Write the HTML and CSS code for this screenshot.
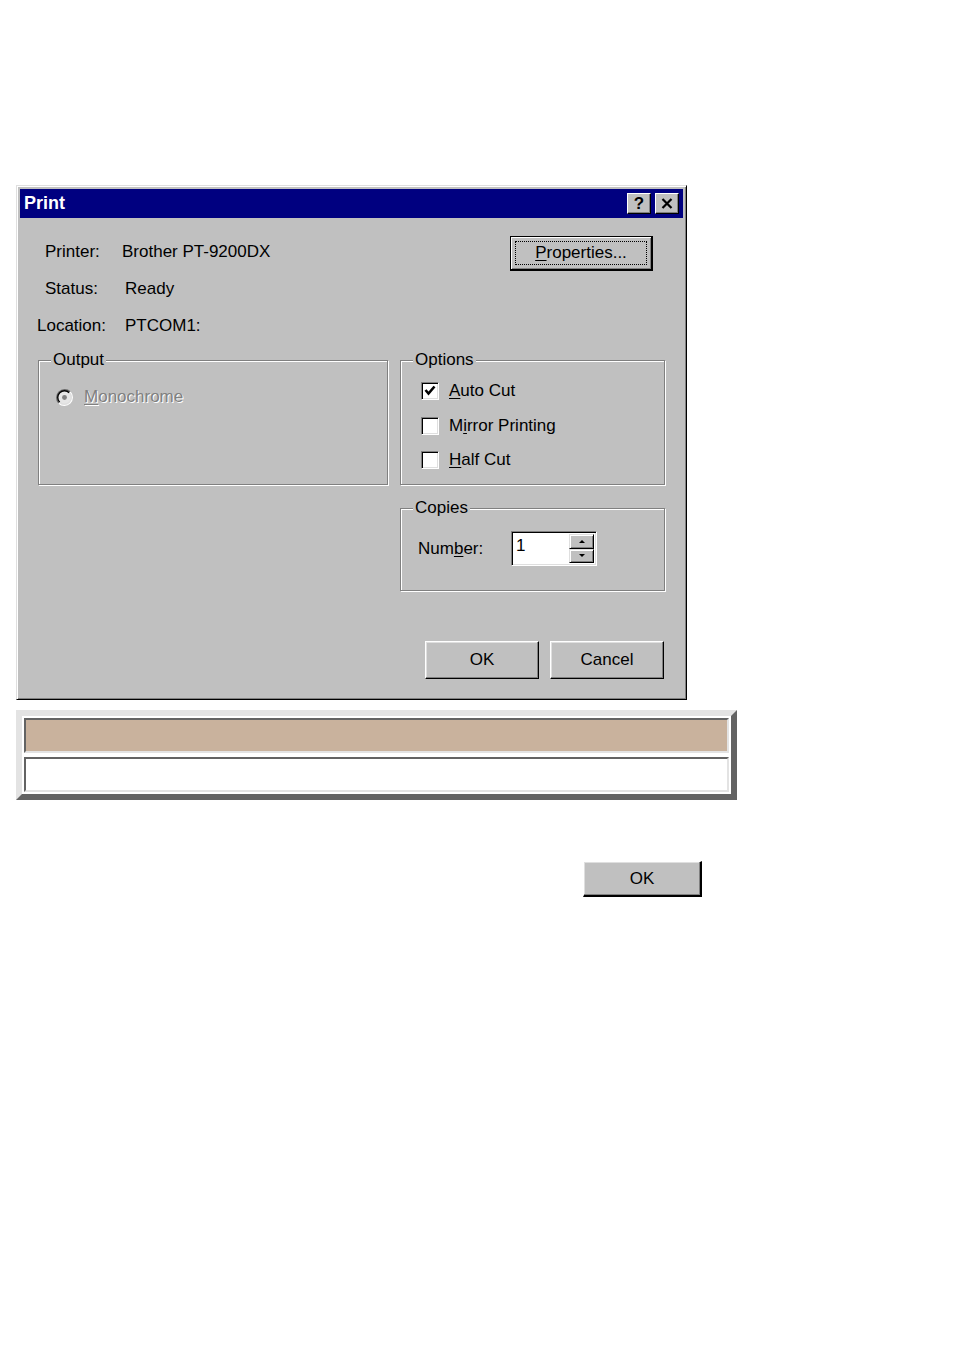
FILE: index.html
```html
<!doctype html>
<html lang="en">
<head>
	<meta charset="utf-8" />
	<title>Print</title>
	<link rel="stylesheet" href="styles.css">
</head>
<body>
	<!-- print dialog -->
	<div class="window">
		<div class="title-bar">
			<span class="title">Print</span>
			<div class="title-btns">
				<span class="tbtn">?</span>
				<span class="tbtn">
					<svg width="12" height="11" viewBox="0 0 12 11"><path d="M1.5 1 L10.5 10 M10.5 1 L1.5 10" stroke="#000" stroke-width="2.2" fill="none"/></svg>
				</span>
			</div>
		</div>
		<div class="dlg-body">
			<div class="top">
				<div class="info">
					<span class="lbl lbl-in">Printer:</span><span class="val">Brother PT-9200DX</span>
					<span class="lbl lbl-in">Status:</span><span class="val val-in">Ready</span>
					<span class="lbl">Location:</span><span class="val val-in">PTCOM1:</span>
				</div>
				<button class="btn btn-default"><span class="focus"><u>P</u>roperties...</span></button>
			</div>
			<div class="groups">
				<fieldset class="group group-output">
					<legend>Output</legend>
					<div class="radio-row">
						<svg class="radio" width="17" height="17" viewBox="0 0 16 16">
							<circle cx="8" cy="8" r="7" fill="#e6e6e6"/>
							<path d="M2.7 13.3 A7.5 7.5 0 0 1 13.3 2.7" stroke="#6a6a6a" stroke-width="1.3" fill="none"/>
							<path d="M3.5 12.5 A6.3 6.3 0 0 1 12.5 3.5" stroke="#000" stroke-width="1.3" fill="none"/>
							<path d="M13.3 2.7 A7.5 7.5 0 0 1 2.7 13.3" stroke="#fff" stroke-width="1.3" fill="none"/>
							<path d="M12.5 3.5 A6.3 6.3 0 0 1 3.5 12.5" stroke="#dfdfdf" stroke-width="1.3" fill="none"/>
							<circle cx="8" cy="8" r="2.3" fill="#808080"/>
						</svg>
						<span class="disabled"><u>M</u>onochrome</span>
					</div>
				</fieldset>
				<fieldset class="group group-options">
					<legend>Options</legend>
					<div class="check-list">
						<div class="check-row">
							<span class="check">
								<svg width="14" height="14" viewBox="0 0 14 14"><path d="M2.5 6 L5.5 9.5 L11.5 2.5" stroke="#000" stroke-width="2.6" fill="none"/></svg>
							</span>
							<span><u>A</u>uto Cut</span>
						</div>
						<div class="check-row">
							<span class="check"></span>
							<span>M<u>i</u>rror Printing</span>
						</div>
						<div class="check-row">
							<span class="check"></span>
							<span><u>H</u>alf Cut</span>
						</div>
					</div>
				</fieldset>
				<fieldset class="group group-copies">
					<legend>Copies</legend>
					<div class="number-row">
						<span class="number-lbl">Num<u>b</u>er:</span>
						<div class="spin-box">
							<span class="spin-val">1</span>
							<div class="spin">
								<span class="spin-btn"><i class="arr arr-up"></i></span>
								<span class="spin-btn"><i class="arr arr-down"></i></span>
							</div>
						</div>
					</div>
				</fieldset>
			</div>
			<div class="actions">
				<button class="btn btn-act">OK</button>
				<button class="btn btn-act">Cancel</button>
			</div>
		</div>
	</div>
	<!-- table frame -->
	<div class="frame">
		<div class="cell cell-tan"></div>
		<div class="cell"></div>
	</div>
	<div class="bottom-row">
		<button class="btn btn-ok">OK</button>
	</div>
</body>
</html>
```
FILE: styles.css
```css
* {
	box-sizing: border-box;
}
body {
	margin: 0;
	padding: 185px 16px 0;
	background-color: #fff;
	font-family: "Liberation Sans", Arial, sans-serif;
	font-size: 17px;
	color: #000;
}
u {
	text-underline-offset: 2px;
}
/* window */
.window {
	width: 671px;
	padding: 3px;
	background-color: #c0c0c0;
	border: 1px solid;
	border-color: #dfdfdf #000 #000 #dfdfdf;
	box-shadow: inset 1px 1px 0 #fff, inset -1px -1px 0 #808080;
}
.title-bar {
	height: 29px;
	padding: 0 4px;
	display: flex;
	align-items: center;
	justify-content: space-between;
	background-color: #000080;
}
.title {
	color: #fff;
	font-size: 18px;
	font-weight: bold;
}
.title-btns {
	display: flex;
	gap: 4px;
}
.tbtn {
	width: 24px;
	height: 21px;
	display: flex;
	align-items: center;
	justify-content: center;
	font-size: 17px;
	font-weight: bold;
	background-color: #c0c0c0;
	border: 1px solid;
	border-color: #fff #000 #000 #fff;
	box-shadow: inset -1px -1px 0 #808080;
}
.dlg-body {
	padding: 18px 18px 17px;
}
/* printer info */
.top {
	display: flex;
	justify-content: space-between;
	align-items: flex-start;
}
.info {
	display: grid;
	grid-template-columns: 85px auto;
	row-gap: 17px;
	line-height: 20px;
	margin: 6px 0 0 -1px;
}
.lbl-in {
	padding-left: 8px;
}
.val-in {
	padding-left: 3px;
}
/* buttons */
.btn {
	padding: 0;
	font-family: inherit;
	font-size: 17px;
	color: #000;
	background-color: #c0c0c0;
	border: 1px solid;
	border-color: #fff #000 #000 #fff;
	box-shadow: inset -1px -1px 0 #808080, inset 1px 1px 0 #dfdfdf;
}
.btn-default {
	width: 143px;
	height: 35px;
	margin-right: 12px;
	padding: 4px;
	display: flex;
	border-color: #000;
	border-width: 1px 2px 2px 1px;
	box-shadow: inset 1px 1px 0 #fff, inset -1px -1px 0 #808080;
}
.focus {
	flex: 1;
	display: flex;
	align-items: center;
	justify-content: center;
	border: 1px dotted #000;
}
.btn-act {
	width: 114px;
	height: 38px;
}
/* group boxes */
.groups {
	margin-top: 15px;
	display: grid;
	grid-template-columns: 350px 265px;
	column-gap: 12px;
	row-gap: 14px;
}
.group {
	margin: 0;
	min-width: 0;
	padding: 12px 10px 14px 12px;
	border: 1px solid #808080;
	box-shadow: 1px 1px 0 #fff, inset 1px 1px 0 #fff;
}
.group legend {
	padding: 0 2px;
	line-height: 18px;
	background-color: #c0c0c0;
}
.group-output {
	grid-column: 1;
	grid-row: 1;
}
.group-options {
	grid-column: 2;
	grid-row: 1;
}
.group-copies {
	grid-column: 2;
	grid-row: 2;
	padding-top: 14px;
	padding-bottom: 24px;
}
.radio-row {
	height: 20px;
	margin: 6px 0 0 5px;
	display: flex;
	align-items: center;
	gap: 11px;
}
.disabled {
	color: #808080;
	text-shadow: 1px 1px 0 #fff;
}
.check-list {
	display: flex;
	flex-direction: column;
	gap: 14.5px;
}
.check-row {
	height: 20px;
	margin-left: 8px;
	display: flex;
	align-items: center;
	gap: 10px;
}
.check {
	width: 18px;
	height: 18px;
	display: flex;
	align-items: center;
	justify-content: center;
	background-color: #fff;
	border: 1px solid;
	border-color: #808080 #fff #fff #808080;
	box-shadow: inset 1px 1px 0 #000, inset -1px -1px 0 #dfdfdf;
}
/* copies */
.number-row {
	margin-left: 5px;
	display: flex;
	align-items: center;
}
.number-lbl {
	width: 93px;
}
.spin-box {
	width: 86px;
	height: 35px;
	padding: 2px;
	display: flex;
	background-color: #fff;
	border: 1px solid;
	border-color: #808080 #fff #fff #808080;
	box-shadow: inset 1px 1px 0 #000, inset -1px -1px 0 #dfdfdf;
}
.spin-val {
	flex: 1;
	padding-left: 2px;
	line-height: 24px;
}
.spin {
	width: 25px;
	display: flex;
	flex-direction: column;
}
.spin-btn {
	flex: 1;
	display: flex;
	align-items: center;
	justify-content: center;
	background-color: #c0c0c0;
	border: 1px solid;
	border-color: #dfdfdf #000 #000 #dfdfdf;
	box-shadow: inset 1px 1px 0 #fff, inset -1px -1px 0 #808080;
}
.arr {
	width: 0;
	height: 0;
	border-left: 3px solid transparent;
	border-right: 3px solid transparent;
}
.arr-up {
	border-bottom: 3px solid #000;
}
.arr-down {
	border-top: 3px solid #000;
}
.actions {
	margin: 50px 1px 0 0;
	display: flex;
	justify-content: flex-end;
	gap: 11px;
}
/* frame below */
.frame {
	width: 721px;
	margin-top: 10px;
	padding: 2px;
	display: flex;
	flex-direction: column;
	gap: 4px;
	border: 6px solid;
	border-color: #e3e3e3 #636363 #636363 #e3e3e3;
}
.cell {
	height: 35px;
	background-color: #fff;
	border: 2px solid;
	border-color: #636363 #e3e3e3 #e3e3e3 #636363;
}
.cell-tan {
	background-color: #c9b29d;
}
.bottom-row {
	margin-top: 61px;
	padding-left: 567px;
}
.btn-ok {
	width: 119px;
	height: 36px;
	border-width: 1px 2px 2px 1px;
}
```
